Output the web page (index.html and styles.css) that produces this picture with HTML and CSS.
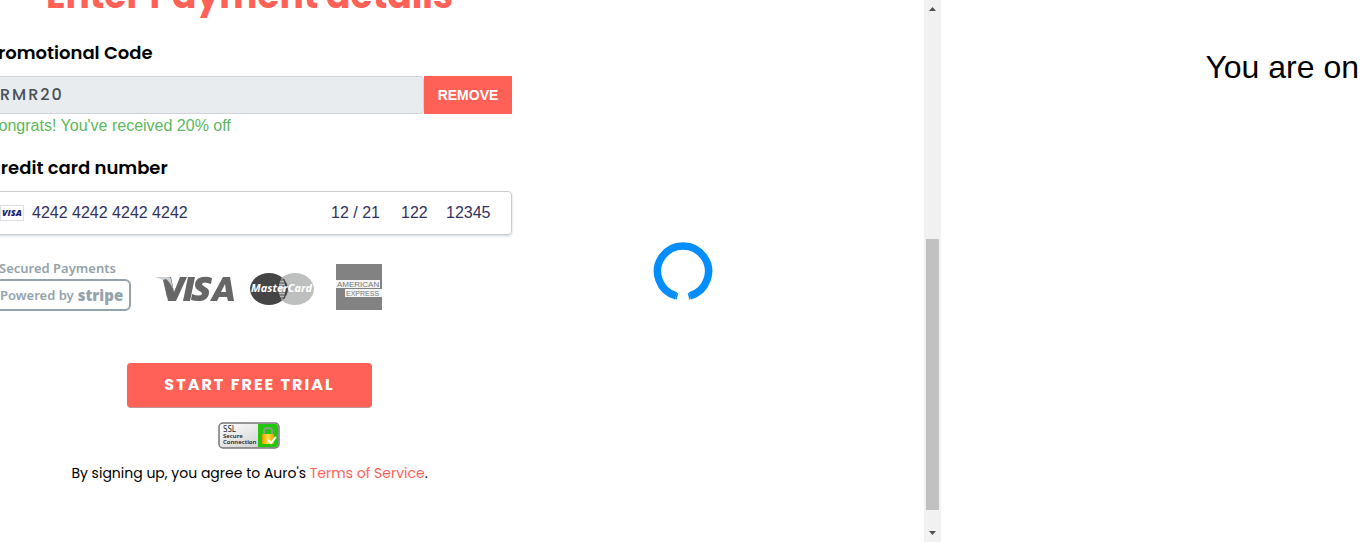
FILE: index.html
```html
<!DOCTYPE html>
<html lang="en">
<head>
<meta charset="utf-8">
<title>Enter Payment details</title>
<link rel="stylesheet" href="styles.css">
</head>
<body>
<div class="layout">
  <main class="pane">
    <form class="checkout">
      <h1 class="title">Enter Payment details</h1>
      <label class="label" for="promo">Promotional Code</label>
      <div class="promo">
        <input class="promo-input" id="promo" type="text" value="RMR20" readonly>
        <button class="remove" type="button">REMOVE</button>
      </div>
      <p class="congrats">Congrats! You've received 20% off</p>
      <label class="label" for="card">Credit card number</label>
      <div class="card">
        <svg class="card-brand" viewBox="0 0 24 16" aria-hidden="true">
          <rect x=".5" y=".5" width="23" height="15" fill="#fff" stroke="#dedfe6"/>
          <text x="2" y="11" class="brand-small">VISA</text>
        </svg>
        <input class="card-input number" id="card" type="text" value="4242 4242 4242 4242">
        <input class="card-input expiry" type="text" aria-label="Expiry date" value="12 / 21">
        <input class="card-input cvc" type="text" aria-label="CVC" value="122">
        <input class="card-input zip" type="text" aria-label="ZIP" value="12345">
      </div>
      <div class="logos">
        <div class="secured">
          <span class="secured-text">Secured Payments</span>
          <span class="powered">Powered by <b class="stripe">stripe</b></span>
        </div>
        <svg class="visa" viewBox="0 0 80 30" role="img" aria-label="Visa">
          <path d="M8 3h8l3 15 6-15h7L21 27h-8z" fill="#666"/>
          <path d="M0 3h13q3 0 3 3l2 9Q12 6 0 3z" fill="#cdd1d4"/>
          <path d="M8 6l3-1q4 3 7 10l-2 8h-4z" fill="#666"/>
          <path d="M33 3h7l-5 24h-7zM57 4l-1 6q-8-3-9 0c0 3 8 3 7 9-1 9-11 9-18 7l1-6q8 3 10 0c1-3-7-3-7-9 0-8 9-10 17-7zM68 3h7l4 24h-6l-1-4h-8l-2 4h-7zM70 10l-4 8h5z" fill="#666" fill-rule="evenodd"/>
        </svg>
        <svg class="mastercard" viewBox="0 0 64 34" role="img" aria-label="MasterCard">
          <ellipse cx="45" cy="17" rx="19" ry="16" fill="#bec0c0"/>
          <ellipse cx="19" cy="17" rx="19" ry="16" fill="#454545"/>
          <path d="M32 5q7 12 0 24-7-12 0-24z" fill="#bec0c0"/>
          <path d="M28 8h7M27 11h9M27 14h9M27 20h9M27 23h9M28 26h7" stroke="#454545"/>
          <text x="1" y="20" class="mc-text">MasterCard</text>
        </svg>
        <svg class="amex" viewBox="0 0 46 46" role="img" aria-label="American Express">
          <path d="M0 0h46v46H0z" fill="#828282"/>
          <path d="M0 16h44v8H0zM9 25h37v8H9z" fill="#f4f4f4"/>
          <text x="1" y="23" class="amex-text">AMERICAN</text>
          <text x="10" y="32" class="amex-text express">EXPRESS</text>
        </svg>
      </div>
      <button class="start" type="button">START FREE TRIAL</button>
      <svg class="ssl" viewBox="0 0 62 28" role="img" aria-label="SSL Secure Connection">
        <defs>
          <linearGradient id="silver" x2="1" y2="1"><stop stop-color="#fff"/><stop offset="1" stop-color="#c8c8c8"/></linearGradient>
          <linearGradient id="gold"><stop stop-color="#e89a00"/><stop offset=".5" stop-color="#ffe13a"/><stop offset="1" stop-color="#e89a00"/></linearGradient>
        </defs>
        <rect x="1" y="1" width="60" height="25" rx="4" fill="url(#silver)"/>
        <path d="M40 2h17q3 0 3 3v17q0 3-3 3H40z" fill="#22c70b"/>
        <rect x="1" y="1" width="60" height="25" rx="4" fill="none" stroke="#777" stroke-width="1.500"/>
        <text x="5" y="10" class="ssl-big">SSL</text>
        <text x="5" y="16" class="ssl-small">Secure</text>
        <text x="5" y="22" class="ssl-small">Connection</text>
        <path d="M46 13V9q0-3 4-3t4 3v4" fill="none" stroke="#8b9e83" stroke-width="2"/>
        <path d="M44 12h12v10H44z" fill="url(#gold)"/>
        <path d="M50 18l3 3 5-6" fill="none" stroke="#fff" stroke-width="2"/>
      </svg>
      <p class="terms">By signing up, you agree to Auro's <a class="link" href="#">Terms of Service</a>.</p>
    </form>
  </main>
  <div class="scrollbar" aria-hidden="true">
    <svg class="arrow" viewBox="0 0 17 17"><path d="M5 11l3.500-4 3.500 4z" fill="#505050"/></svg>
    <div class="track"><div class="thumb"></div></div>
    <svg class="arrow" viewBox="0 0 17 17"><path d="M5 6l3.500 4L12 6z" fill="#505050"/></svg>
  </div>
  <aside class="side"><p class="side-text">You are on</p></aside>
</div>
<svg class="spinner" viewBox="0 0 60 60" role="img" aria-label="Loading">
  <path d="M23 54.900A25.500 25.500 0 1 1 37 54.900" fill="none" stroke="#038eff" stroke-width="7.500"/>
  <path d="M23 54.900L24.500 55.300M37 54.900L35.500 55.300" fill="none" stroke="#038eff" stroke-width="6.500" stroke-linejoin="round"/>
</svg>
</body>
</html>
```
FILE: styles.css
```css
* { box-sizing: border-box; }
body {
  margin: 0;
  background: #fff;
  color: #000;
  font-family: "Liberation Sans", Arial, sans-serif;
  font-size: 16px;
  overflow: hidden;
}
.layout { display: flex; height: 100vh; overflow: hidden; }
.pane { flex: 0 1 924px; min-width: 0; overflow: hidden; }
.checkout {
  display: flex;
  flex-direction: column;
  width: 525px;
  margin-left: -13px;
  margin-top: -28px;
}
.title, .label, .promo-input, .start, .terms { font-family: Poppins, Inter, sans-serif; }
.title {
  margin: 0 0 20px;
  font-size: 36px;
  line-height: 48px;
  font-weight: 700;
  color: #ff6156;
  text-align: center;
  white-space: nowrap;
}
.label { font-size: 18px; line-height: 26px; font-weight: 600; margin-bottom: 10px; }
.promo { display: flex; height: 38px; }
.promo-input {
  flex: 1;
  min-width: 0;
  padding: 0 12px 2px;
  border: 1px solid #ced4da;
  border-radius: 4px;
  background: #e8ecef;
  color: #495057;
  font-size: 16px;
  font-weight: 500;
  letter-spacing: 2px;
}
.remove {
  width: 88px;
  padding: 0;
  border: 0;
  background: #ff6156;
  color: #fff;
  font: 700 14px "Liberation Sans", Arial, sans-serif;
}
.congrats { margin: 0 0 17px; line-height: 24px; color: #5cb85c; }
.card {
  display: flex;
  align-items: center;
  height: 44px;
  padding: 0 9px 0 12px;
  border: 1px solid #ccc;
  border-radius: 4px;
  box-shadow: 0 1px 3px #cfd7df;
}
.card-brand { width: 24px; height: 16px; margin-right: 8px; }
.brand-small { font: italic 800 9px "Open Sans", sans-serif; fill: #1a1f71; }
.card-input {
  min-width: 0;
  padding: 0;
  border: 0;
  background: none;
  color: #32325d;
  font: 16px "Liberation Sans", Arial, sans-serif;
}
.number { flex: 1; }
.expiry { width: 70px; }
.cvc { width: 45px; }
.zip { width: 56px; }
.logos { display: flex; align-items: flex-start; padding: 25px 0 0 12px; height: 128px; }
.secured { display: flex; flex-direction: column; width: 132px; color: #94a3ab; font-family: "Noto Sans", sans-serif; font-weight: 600; font-size: 13px; white-space: nowrap; }
.secured-text { line-height: 16px; margin-bottom: 3px; }
.powered {
  display: flex;
  align-items: center;
  gap: 4px;
  height: 32px;
  margin-left: -8px;
  padding-left: 7px;
  border: 2px solid #94a3ab;
  border-radius: 6px;
}
.stripe { font-size: 15px; }
.visa { width: 80px; height: 30px; margin: 14px 0 0 24px; }
.mastercard { width: 64px; height: 34px; margin: 12px 0 0 15px; }
.amex { width: 46px; height: 46px; margin: 4px 0 0 22px; }
.mc-text { font: italic 700 11px "Open Sans", sans-serif; fill: #fff; }
.amex-text { font: 8px "Liberation Sans", Arial, sans-serif; fill: #777; }
.express { font-size: 7px; }
.start {
  align-self: center;
  width: 245px;
  height: 45px;
  padding: 0 0 1px;
  border: 0;
  border-bottom: 1px solid #b99;
  border-radius: 4px;
  background: #ff6156;
  color: #fff;
  font-size: 16px;
  font-weight: 700;
  letter-spacing: 2px;
}
.ssl { align-self: center; width: 62px; height: 28px; margin: 14px 2px 0 0; }
.ssl-big { font: 8px "Noto Sans", sans-serif; fill: #222; }
.ssl-small { font: 600 6px "Noto Sans", sans-serif; fill: #222; }
.terms { margin: 12px 0 0; font-size: 14px; line-height: 22px; text-align: center; }
.link { color: #ff6156; text-decoration: none; }
.scrollbar { flex: 0 0 17px; display: flex; flex-direction: column; background: #f1f1f1; }
.arrow { width: 17px; height: 17px; }
.track { flex: 1; display: flex; flex-direction: column; justify-content: flex-end; padding: 0 2px 15px; }
.thumb { height: 55%; background: #c1c1c1; }
.side { flex: 1; overflow: hidden; }
.side-text { margin: 48px 7px 0 0; font-size: 32px; line-height: 38px; text-align: right; white-space: nowrap; }
.spinner { position: fixed; inset: 0; margin: auto; width: 60px; height: 60px; }
```
